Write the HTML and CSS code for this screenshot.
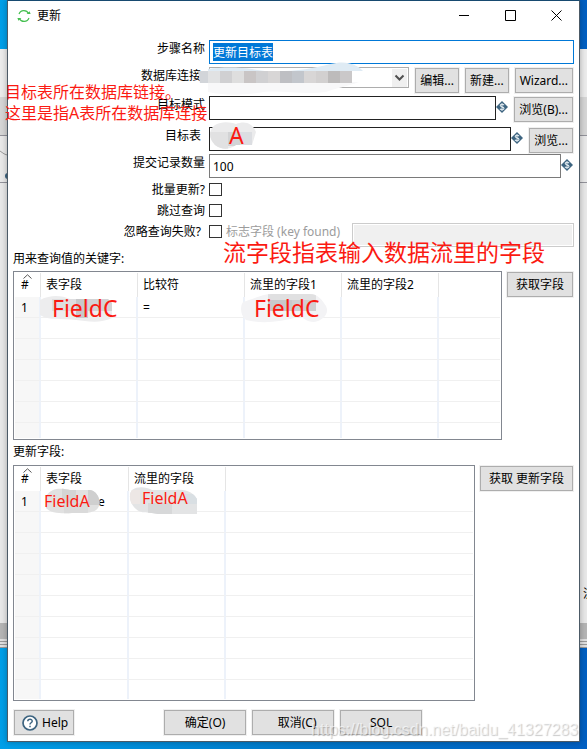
FILE: index.html
```html
<!DOCTYPE html>
<html lang="zh-CN">
<head>
<meta charset="utf-8">
<meta name="viewport" content="width=device-width, initial-scale=1">
<title>更新</title>
<link rel="stylesheet" href="styles.css">
</head>
<body>
<svg class="defs" width="0" height="0" aria-hidden="true">
  <symbol id="variable" viewBox="0 0 12 12">
    <path d="M6 0 12 6 6 12 0 6Z" fill="#3d6480"/>
    <path d="M8 4.2C7.5 3 4.2 2.9 4.2 4.6 4.2 6.2 8 5.5 8 7.4 8 9.1 4.5 9 4 7.7M6 2V10" fill="none" stroke="#dce6ec" stroke-width="1.1"/>
  </symbol>
</svg>

<div class="backdrop" aria-hidden="true">
  <div class="pane-menu"></div>
  <div class="pane-tabs"></div>
  <div class="pane-tools"><svg width="8" height="46" viewBox="0 0 8 46"><path d="M0 15C3 17 5 19 8 19" fill="none" stroke="#999"/><circle cx="8" cy="40" r="3" fill="#3d6480"/></svg></div>
  <div class="pane-body"><span>流</span></div>
  <div class="pane-scroll"></div>
  <div class="pane-status"></div>
</div>

<main class="dialog">
  <header class="titlebar">
    <svg width="14" height="14" viewBox="0 0 14 14"><g fill="none" stroke="#45bf50" stroke-width="1.2"><path d="M2 5A5.2 5.2 0 0 1 11.6 4.6M12 9A5.2 5.2 0 0 1 2.4 9.4"/></g><path d="M9.6 5H13.6L12.6 2.2ZM4.4 9H.4L1.4 11.8Z" fill="#45bf50"/></svg>
    <h1>更新</h1>
    <button class="win" aria-label="最小化"><svg width="11" height="11"><path d="M0 5.500H10" stroke="#000"/></svg></button>
    <button class="win" aria-label="最大化"><svg width="11" height="11"><path d="M.5.5H10.500V10.500H.5Z" fill="none" stroke="#000"/></svg></button>
    <button class="win" aria-label="关闭"><svg width="11" height="11"><path d="M.5.5 10.500 10.500M10.500.5.5 10.500" stroke="#000"/></svg></button>
  </header>

  <form class="content" onsubmit="return false">
    <div class="fields">
      <label for="step">步骤名称</label>
      <div class="row"><input class="box active" id="step" type="text" value="更新目标表"></div>

      <label class="inset" for="conn">数据库连接</label>
      <div class="row spaced">
        <span class="combo"><select id="conn"><option></option></select><svg width="15" height="18" viewBox="0 0 15 18"><path d="M3.500 6.500 7.500 10.500 11.500 6.500" fill="none" stroke="#505050" stroke-width="2"/></svg></span>
        <button class="btn">编辑...</button><button class="btn">新建...</button><button class="btn">Wizard...</button>
      </div>

      <label for="schema">目标模式</label>
      <div class="row"><input class="box dark" id="schema" type="text"><svg class="var"><use href="#variable"/></svg><button class="btn after">浏览(B)...</button></div>

      <label class="inset" for="table">目标表</label>
      <div class="row"><input class="box dark" id="table" type="text"><svg class="var"><use href="#variable"/></svg><button class="btn after">浏览...</button></div>

      <label for="commit">提交记录数量</label>
      <div class="row ends"><input class="box" id="commit" type="text" value="100"><svg class="var"><use href="#variable"/></svg></div>

      <label for="batch">批量更新?</label>
      <div class="row"><input class="check" id="batch" type="checkbox"></div>

      <label for="skip">跳过查询</label>
      <div class="row"><input class="check" id="skip" type="checkbox"></div>

      <label class="inset" for="ignore">忽略查询失败?</label>
      <div class="row"><input class="check" id="ignore" type="checkbox"><label class="flag" for="flag">标志字段 (key found)</label><input class="box off" id="flag" type="text" disabled></div>
    </div>

    <h2>用来查询值的关键字:</h2>
    <section class="group">
      <div class="grid">
        <table>
          <colgroup><col class="num"><col class="w97"><col class="w107"><col class="w97"><col class="w97"><col></colgroup>
          <thead><tr><th><svg width="9" height="5"><path d="M.5 4.500 4.500.8 8.500 4.500" fill="none" stroke="#555"/></svg>#</th><th>表字段</th><th>比较符</th><th>流里的字段1</th><th>流里的字段2</th><th></th></tr></thead>
          <tbody>
            <tr><td>1</td><td></td><td>=</td><td></td><td></td><td></td></tr>
            <tr><td></td><td></td><td></td><td></td><td></td><td></td></tr>
            <tr><td></td><td></td><td></td><td></td><td></td><td></td></tr>
            <tr><td></td><td></td><td></td><td></td><td></td><td></td></tr>
            <tr><td></td><td></td><td></td><td></td><td></td><td></td></tr>
            <tr><td></td><td></td><td></td><td></td><td></td><td></td></tr>
            <tr class="last"><td></td><td></td><td></td><td></td><td></td><td></td></tr>
          </tbody>
        </table>
      </div>
      <button class="btn wide">获取字段</button>
    </section>

    <h2>更新字段:</h2>
    <section class="group">
      <div class="grid">
        <table>
          <colgroup><col class="num"><col class="w88"><col class="w97"><col></colgroup>
          <thead><tr><th><svg width="9" height="5"><path d="M.5 4.500 4.500.8 8.500 4.500" fill="none" stroke="#555"/></svg>#</th><th>表字段</th><th>流里的字段</th><th></th></tr></thead>
          <tbody>
            <tr><td>1</td><td class="tail">e</td><td></td><td></td></tr>
            <tr><td></td><td></td><td></td><td></td></tr>
            <tr><td></td><td></td><td></td><td></td></tr>
            <tr><td></td><td></td><td></td><td></td></tr>
            <tr><td></td><td></td><td></td><td></td></tr>
            <tr><td></td><td></td><td></td><td></td></tr>
            <tr><td></td><td></td><td></td><td></td></tr>
            <tr><td></td><td></td><td></td><td></td></tr>
            <tr><td></td><td></td><td></td><td></td></tr>
            <tr class="last tall"><td></td><td></td><td></td><td></td></tr>
          </tbody>
        </table>
      </div>
      <button class="btn wide">获取 更新字段</button>
    </section>

    <footer class="actions">
      <button class="btn help"><svg width="16" height="16" viewBox="0 0 16 16"><circle cx="8" cy="8" r="7" fill="#fff" stroke="#3d6480" stroke-width="1.700"/><path d="M5.800 6.300C5.800 3.600 10.300 3.700 10.200 6.200 10.200 7.800 8 7.700 8 9.500M8 10.700V12.200" fill="none" stroke="#3d6480" stroke-width="1.500"/></svg>Help</button>
      <div class="main-actions"><button class="btn">确定(O)</button><button class="btn cancel">取消(C)</button><button class="btn">SQL</button></div>
    </footer>
  </form>
</main>

<div class="notes">
  <svg class="smudges" width="587" height="749" viewBox="0 0 587 749" aria-hidden="true">
    <defs>
      <clipPath id="c1"><path d="M215 125C222 121 230 122 236 124C244 121 252 122 256 132L252 145H236C229 150 222 150 215 145C208 138 209 129 215 125Z"/></clipPath>
      <clipPath id="c2"><path d="M40 300C52 294 62 296 70 299H108L112 303V318C100 324 86 321 76 320C64 318 48 321 40 315Z"/></clipPath>
      <clipPath id="c3"><path d="M243 302C254 299 262 294 272 294H310C318 294 322 300 326 306C330 314 322 321 314 322C306 322 304 317 298 317C280 322 262 324 246 320C240 315 240 306 243 302Z"/></clipPath>
      <clipPath id="c4"><path d="M46 496C52 487 62 488 70 490H90C98 491 102 502 98 508C94 514 82 513 72 513C62 514 50 513 46 508Z"/></clipPath>
      <clipPath id="c5"><path d="M132 490C138 486 146 487 152 490H176C188 489 194 494 197 499V514H158C150 512 140 514 136 509C130 504 128 495 132 490Z"/></clipPath>
    </defs>
    <path d="M208 69C222 67 238 67 252 69C275 74 310 70 330 64C346 60 357 64 363 71H208Z" fill="#dfebf4"/>
    <path d="M208 82H359C346 87 335 88 326 92C304 95 282 90 264 92C246 95 226 96 208 92Z" fill="#f8f8f9"/>
    <path d="M198 71H212V83H200Z" fill="#d2d5d9"/>
    <g><path d="M208 71H220V83H208Z" fill="#e1e2e3"/><path d="M220 71H232V83H220ZM256 71H268V83H256Z" fill="#d0d0d2"/><path d="M232 71H244V83H232Z" fill="#dedede"/><path d="M244 71H256V83H244Z" fill="#c9c5c5"/><path d="M268 71H280V83H268ZM304 71H316V83H304Z" fill="#d8d6d6"/><path d="M280 71H292V83H280Z" fill="#bebfc3"/><path d="M292 71H304V83H292Z" fill="#c2c6cc"/><path d="M316 71H328V83H316Z" fill="#d2d0d0"/><path d="M328 71H340V83H328Z" fill="#bdbbbb"/><path d="M340 71H352V83H340Z" fill="#cac8c9"/></g>
    <g clip-path="url(#c1)"><path d="M205 120H260V150H205Z" fill="#ebebec"/><path d="M208 132H228V150H208Z" fill="#e1e1e2"/><path d="M228 132H240V146H228Z" fill="#d2d3d5"/><path d="M240 132H252V146H240Z" fill="#dcdee2"/></g>
    <g clip-path="url(#c2)"><path d="M38 290H115V325H38Z" fill="#ededee"/><path d="M52 299H76V311H52Z" fill="#dedee0"/><path d="M76 299H88V318H76Z" fill="#c8c8ca"/><path d="M88 299H112V311H88Z" fill="#d3d3d5"/></g>
    <g clip-path="url(#c3)"><path d="M238 290H330V325H238Z" fill="#f3f3f5"/><path d="M268 290H316V300H268Z" fill="#e0e0e1"/><path d="M268 300H292V311H268Z" fill="#c9c9cb"/><path d="M292 300H316V311H292Z" fill="#d0cfd1"/></g>
    <g clip-path="url(#c4)"><path d="M40 485H102V516H40Z" fill="#e1e1e1"/><path d="M62 488H76V503H62Z" fill="#d4d4d4"/><path d="M88 488H102V505H88Z" fill="#cfcfcf"/><path d="M64 503H88V515H64Z" fill="#dadada"/></g>
    <g clip-path="url(#c5)"><path d="M128 484H199V516H128Z" fill="#e3e4e5"/><path d="M128 490H140V504H128Z" fill="#ede7e5"/><path d="M148 503H172V516H148Z" fill="#d7d8d9"/><path d="M184 494H198V504H184Z" fill="#d9dfe3"/></g>
  </svg>
  <p class="note n-conn">目标表所在数据库链接。<br>这里是指A表所在数据库连接</p>
  <p class="note big n-table">A</p>
  <p class="note big n-stream">流字段指表输入数据流里的字段</p>
  <p class="note big n-key1">FieldC</p>
  <p class="note big n-key2">FieldC</p>
  <p class="note n-up1">FieldA</p>
  <p class="note n-up2">FieldA</p>
  <p class="watermark">https://blog.csdn.net/baidu_41327283</p>
</div>
<script>
  const step = document.getElementById('step');
  step.focus();
  step.select();
</script>
</body>
</html>
```
FILE: styles.css
```css
* { box-sizing: border-box; }

body {
  position: relative;
  margin: 0;
  padding: 0 7px 7px;
  min-height: 100vh;
  background: linear-gradient(90deg, #009fe8, #0079ca 50%, #005fc2);
  font: 12px/18px "Noto Sans", "Noto Sans CJK SC", sans-serif;
  color: #000;
  overflow: hidden;
}

button, input, select { font: inherit; color: inherit; margin: 0; }
h1, h2, p { margin: 0; font-size: 12px; font-weight: 400; }
.defs { position: absolute; }

/* Window behind the dialog */
.backdrop { position: absolute; top: 49px; left: 0; right: 0; }
.pane-menu { height: 48px; background: #ececec; }
.pane-tabs { height: 39px; background: #d6d6d6; border-bottom: 1px solid #92929a; }
.pane-tools { height: 47px; background: #e9e9e9; border-bottom: 1px solid #92929a; }
.pane-tools svg { display: block; }
.pane-body { height: 440px; background: #e8e8e8; overflow: hidden; text-align: right; }
.pane-body span { display: inline-block; width: 4px; padding-top: 402px; text-align: left; }
.pane-scroll { height: 16px; background: #b5b5b5; }
.pane-status { height: 9px; background: repeating-linear-gradient(#e0e0e0 0 2px, #999 2px 3px); }

.dialog {
  position: relative;
  background: #fff;
  border: 1px solid #4c5a66;
  border-top-color: #174a70;
  box-shadow: 0 0 6px rgba(0, 0, 0, .3);
}

.titlebar { display: flex; align-items: center; height: 29px; padding-left: 9px; }
.titlebar h1 { flex: 1; padding-left: 6px; }
.win { width: 46px; height: 29px; padding: 0; border: 0; background: none; }
.win svg { display: block; margin: auto; }

.content { padding: 10px 5px 6px; }

.fields {
  display: grid;
  grid-template-columns: 192px 1fr;
  grid-template-rows: 27px 29px 31px 27px 27px 21px 21px 24px;
  column-gap: 4px;
}
.fields > label { text-align: right; }
.fields > .inset { padding-right: 4px; }
.row { display: flex; align-items: flex-start; min-width: 0; }
.spaced { gap: 6px; }
.ends { padding-right: 1px; }

.box {
  flex: 1;
  min-width: 0;
  height: 24px;
  padding: 0 3px;
  border: 1px solid #7a7a7a;
  border-radius: 0;
  background: #fff;
  outline: 0;
}
.active { border-color: #0078d7; }
.active::selection { background: #0078d7; color: #fff; }
.dark { border-color: #222; }
.off { border-color: #ccc; background: #f0f0f0; box-shadow: inset 0 0 0 1px #fff; }
.flag { padding: 0 12px 0 4px; color: #9c9c9c; line-height: 18px; }

.combo { position: relative; flex: 1; height: 21px; }
.combo select {
  display: block;
  width: 100%;
  height: 21px;
  border: 1px solid #adadad;
  border-radius: 0;
  background: #fff;
  appearance: none;
}
.combo svg { position: absolute; top: 2px; right: 2px; background: #f0f0f0; pointer-events: none; }

.var { width: 12px; height: 12px; margin-top: 5px; flex: none; }

.check {
  width: 13px;
  height: 13px;
  margin-top: 2px;
  border: 1px solid #333;
  background: #fff;
  appearance: none;
}

.btn {
  height: 25px;
  margin: 1px 1px 0 0;
  padding: 0 4px;
  border: 1px solid #adadad;
  background: #e1e1e1;
  box-shadow: 0 0 0 1px #f0f0f0;
  white-space: nowrap;
}
.spaced .btn { margin-right: 0; }
.spaced .btn:last-child { margin-right: 1px; }
.after { margin-left: 6px; }
.wide { padding: 0 8px; }

h2 { padding-top: 3px; height: 24px; }
.group { display: flex; align-items: flex-start; gap: 5px; }
.group + h2 { height: 25px; }

.grid { flex: 1; min-width: 0; border: 1px solid #828790; padding: 1px; }
.grid table { width: 100%; table-layout: fixed; border-collapse: separate; border-spacing: 0; }
.num { width: 26px; }
.w88 { width: 88px; }
.w97 { width: 97px; }
.w107 { width: 107px; }
th, td { height: 21px; padding: 0 5px; font-weight: 400; text-align: left; line-height: 18px; }
th { height: 24px; border-right: 1px solid #e5e5e5; }
td { border-right: 2px solid #edf2fa; border-bottom: 1px solid #f0f0f0; padding-top: 2px; }
th:last-child, td:last-child { border-right: 0; }
th:first-child, td:first-child { padding-left: 6px; }
td:first-child { background: #f7f7f7; }
th svg { position: absolute; margin: -2px 0 0 2px; }
.last td { height: 15px; border-bottom: 0; }
.tall td { height: 19px; }
td.tail { padding-left: 57px; }

.actions { display: flex; padding-top: 8px; }
.help { display: flex; align-items: center; gap: 4px; margin-left: 1px; padding: 0 5px 0 7px; }
.main-actions { display: flex; gap: 6px; margin: 0 auto 0 89px; }
.main-actions .btn { width: 82px; margin-right: 0; }
.main-actions .cancel { padding-left: 12px; }

/* Hand-drawn annotations over the dialog */
.notes { position: absolute; inset: 0; pointer-events: none; }
.smudges { position: absolute; top: 0; left: 0; }
.note { position: absolute; color: #fb1a12; font-size: 16px; line-height: 21px; white-space: nowrap; }
.big { font-size: 23px; line-height: 30px; }
.n-conn { left: 5px; top: 82px; }
.n-table { left: 229px; top: 120px; }
.n-stream { left: 223px; top: 237px; }
.n-key1 { left: 52px; top: 293px; }
.n-key2 { left: 254px; top: 293px; }
.n-up1 { left: 44px; top: 491px; }
.n-up2 { left: 142px; top: 488px; }
.watermark {
  position: absolute;
  right: 9px;
  bottom: 10px;
  font: 16px/18px "Liberation Sans", sans-serif;
  color: rgba(255, 255, 255, .6);
  text-shadow: 1px 1px 1px rgba(0, 0, 0, .22);
}
```
